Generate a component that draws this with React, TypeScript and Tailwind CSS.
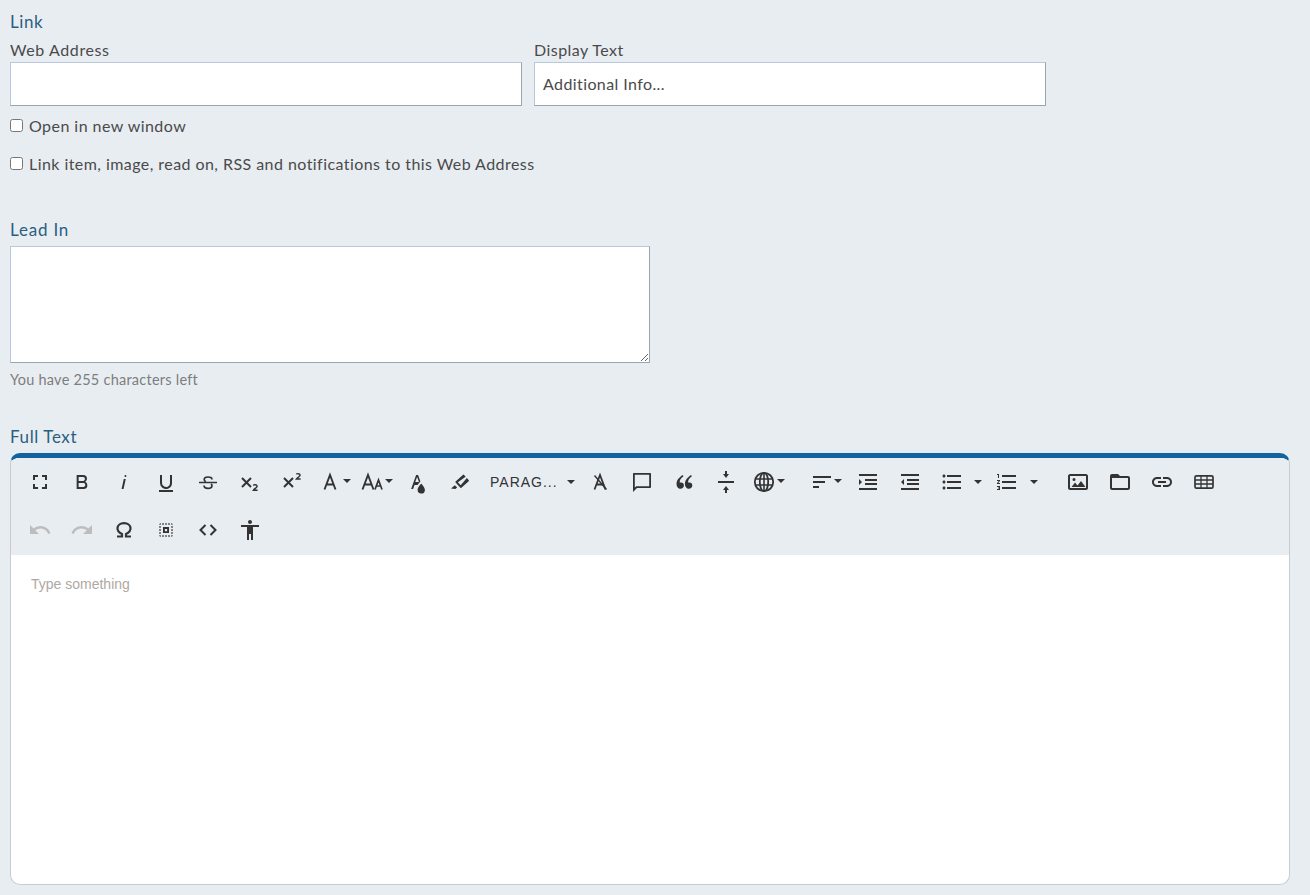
import React from "react";

const P = ({ d, s = 24, c = "#333333" }: { d: string; s?: number; c?: string }) => (
  <svg width={s} height={s} viewBox="0 0 24 24" fill={c} fillRule="evenodd" className="shrink-0">
    <path d={d} />
  </svg>
);

const Caret = ({ className = "" }: { className?: string }) => (
  <span className={"block w-0 h-0 border-l-[4px] border-r-[4px] border-t-[4px] border-l-transparent border-r-transparent border-t-[#333333] shrink-0 " + className} />
);

const Btn = ({ children, w = "w-[42px]" }: { children: React.ReactNode; w?: string }) => (
  <div className={"h-[48px] flex items-center justify-center shrink-0 " + w}>{children}</div>
);

const Stroke = ({ children, s = 24 }: { children: React.ReactNode; s?: number }) => (
  <svg width={s} height={s} viewBox="0 0 24 24" fill="none" stroke="#333333" strokeWidth="2" className="shrink-0">
    {children}
  </svg>
);

const d = {
  full: "M7 14H5v5h5v-2H7v-3zm-2-4h2V7h3V5H5v5zm12 7h-3v2h5v-5h-2v3zM14 5v2h3v3h2V5h-5z",
  bold: "M15.25,11.8h0A3.68,3.68,0,0,0,17,9a3.93,3.93,0,0,0-3.86-4H6.65V19h7a3.74,3.74,0,0,0,3.7-3.78V15.1A3.64,3.64,0,0,0,15.25,11.8ZM8.65,7h4.2a2.09,2.09,0,0,1,2,1.3,2.09,2.09,0,0,1-1.3,2.61,2.23,2.23,0,0,1-.66.09H8.65Zm4.6,10H8.65V13h4.6a2.09,2.09,0,0,1,2,1.3,2.09,2.09,0,0,1-1.3,2.61A2.23,2.23,0,0,1,13.25,17Z",
  italic: "M11.76,9h2l-2.2,10h-2Zm1.68-4a1,1,0,1,0,1,1,1,1,0,0,0-1-1Z",
  under: "M19,20v2H5V20Zm-3-6.785a4,4,0,0,1-5.74,3.4A3.75,3.75,0,0,1,8,13.085V5.005H6v8.21a6,6,0,0,0,8,5.44,5.851,5.851,0,0,0,4-5.65v-8H16Z",
  undo: "M12.5 8c-2.65 0-5.05.99-6.9 2.6L2 7v9h9l-3.62-3.62c1.39-1.16 3.16-1.88 5.12-1.88 3.54 0 6.55 2.31 7.6 5.5l2.37-.78C21.08 11.03 17.15 8 12.5 8z",
  redo: "M18.4 10.6C16.55 8.99 14.15 8 11.5 8c-4.65 0-8.58 3.03-9.96 7.22L3.9 16c1.05-3.19 4.05-5.5 7.6-5.5 1.95 0 3.73.72 5.12 1.88L13 16h9V7l-3.6 3.6z",
  select: "M3 5h2V3c-1.1 0-2 .9-2 2zm0 8h2v-2H3v2zm4 8h2v-2H7v2zM3 9h2V7H3v2zm10-6h-2v2h2V3zm6 0v2h2c0-1.1-.9-2-2-2zM5 21v-2H3c0 1.1.9 2 2 2zm-2-4h2v-2H3v2zM9 3H7v2h2V3zm2 18h2v-2h-2v2zm8-8h2v-2h-2v2zm0 8c1.1 0 2-.9 2-2h-2v2zm0-12h2V7h-2v2zm0 8h2v-2h-2v2zm-4 4h2v-2h-2v2zm0-16h2V3h-2v2zM8 16h8V8H8v8zm2.5-5.5h3v3h-3v-3z",
  acc: "M12 2c1.1 0 2 .9 2 2s-.9 2-2 2-2-.9-2-2 .9-2 2-2zm9 7h-6v13h-2v-6h-2v6H9V9H3V7h18v2z",
  chat: "M20,3H4C3.4,3,3,3.4,3,4v18l4-4h13c.6,0,1-.4,1-1V4C21,3.4,20.6,3,20,3z M19.2,16.2H6.2L4.8,17.6V4.8h14.4V16.2z",
  hr: "M9 20h2v3h2v-3h2l-3-4-3 4zm6-16h-2V1h-2v3H9l3 4 3-4zM4 11v2h16v-2H4z",
  indent: "M3,9v6l3-3L3,9z M3,20h18v-2H3V20z M3,6h18V4H3V6z M9,11h12V9H9V11z M9,15h12v-2H9V15z",
  outdent: "M6,9v6l-3-3L6,9z M3,20h18v-2H3V20z M3,6h18V4H3V6z M9,11h12V9H9V11z M9,15h12v-2H9V15z",
  ul: "M4 10.5c-.83 0-1.5.67-1.5 1.5s.67 1.5 1.5 1.5 1.5-.67 1.5-1.5-.67-1.5-1.5-1.5zm0-6c-.83 0-1.5.67-1.5 1.5S3.17 7.5 4 7.5 5.5 6.83 5.5 6 4.83 4.5 4 4.5zm0 12c-.83 0-1.5.68-1.5 1.5s.68 1.5 1.5 1.5 1.5-.68 1.5-1.5-.67-1.5-1.5-1.5zM7 19h14v-2H7v2zm0-6h14v-2H7v2zm0-8v2h14V5H7z",
  ol: "M2 17h2v.5H3v1h1v.5H2v1h3v-4H2v1zm1-9h1V4H2v1h1v3zm-1 3h1.8L2 13.1v.9h3v-1H3.2L5 10.9V10H2v1zm5-6v2h14V5H7zm0 14h14v-2H7v2zm0-6h14v-2H7v2z",
  image: "M20,4H4C3,4,2,5,2,6v12c0,1,1,2,2,2h16c1,0,2-1,2-2V6C22,5,21,4,20,4z M20,18H4V6h16V18z M5.5,17l3.5-4.5 2.5,3 3.5-4.5 4.5,6H5.5z M8,11a1.5,1.5,0,1,0,0-3a1.5,1.5,0,0,0,0,3z",
  folder: "M20 6h-8l-2-2H4c-1.1 0-1.99.9-1.99 2L2 18c0 1.1.9 2 2 2h16c1.1 0 2-.9 2-2V8c0-1.1-.9-2-2-2zm0 12H4V8h16v10z",
  link: "M3.9 12c0-1.71 1.39-3.1 3.1-3.1h4V7H7c-2.76 0-5 2.24-5 5s2.24 5 5 5h4v-1.9H7c-1.71 0-3.1-1.39-3.1-3.1zM8 13h8v-2H8v2zm9-6h-4v1.9h4c1.71 0 3.1 1.39 3.1 3.1s-1.39 3.1-3.1 3.1h-4V17h4c2.76 0 5-2.24 5-5s-2.24-5-5-5z",
  drop: "M15.2,13.494s-3.6,3.9-3.6,6.3a3.65,3.65,0,0,0,7.3.1v-.1C18.9,17.394,15.2,13.494,15.2,13.494Zm-1.47-1.357.669-.724L12.1,5h-2l-5,14h2l1.43-4h2.943A24.426,24.426,0,0,1,13.726,12.137ZM11.1,6.9l1.86,5.1H9.244Z",
  marker: "M9.9,12.2l7.7-5.4,1.2,1.3-6.1,7.2-2.8-3.1M7.6,12.6l4.5,5a.9.9,0,0,0,1.3.1l7.3-6.4a.9.9,0,0,0-.1-1.3L16.1,5a.9.9,0,0,0-1.3-.1L7.6,11.4A.9.9,0,0,0,7.6,12.6ZM6.8,15.2l-3.8,3.3,4.3.5,1.9-1.6Z",
  quote: "M10.6,5l.9,1.3c-1.4,1-2.4,1.9-3,2.9c-.5.8-.8,1.8-.8,2.9v.4l1.2-.1c1,0,1.7.3,2.2.9c.6.6.8,1.3.8,2.1c0,.9-.3,1.7-1,2.4c-.6.6-1.4.9-2.4.9c-1.1,0-2.1-.4-2.8-1.3C4.9,16.5,4.5,15.4,4.5,14c0-1.7.5-3.3,1.5-4.7C7,7.9,8.6,6.5,10.6,5z M19,5l.9,1.3c-1.4,1-2.4,1.9-3,2.9c-.5.8-.8,1.8-.8,2.9v.4l1.2-.1c1,0,1.7.3,2.2.9c.6.6.8,1.3.8,2.1c0,.9-.3,1.7-1,2.4c-.6.6-1.4.9-2.4.9c-1.1,0-2.1-.4-2.8-1.3c-.8-.9-1.2-2-1.2-3.4c0-1.7.5-3.3,1.5-4.7C15.4,7.9,17,6.5,19,5z",
};

const sans = "font-['Lato','Noto_Sans',sans-serif]";

function Toolbar() {
  return (
    <div className="bg-[#e8edf2] pl-[8px]">
      <div className="flex">
        <Btn><P d={d.full} /></Btn>
        <Btn><P d={d.bold} /></Btn>
        <Btn><P d={d.italic} /></Btn>
        <Btn><P d={d.under} /></Btn>
        <Btn>
          <Stroke>
            <path d="M16 9.5C16 7.8 14.2 7 12 7S8.2 8 8.2 9.6c0 1 .6 1.7 1.6 2.1M15 14c.7.5 1 1 1 1.8C16 17.5 14.2 18.4 12 18.4S8 17.4 8 15.6" strokeWidth="1.7" />
            <path d="M3 12.6h18" strokeWidth="1.5" />
          </Stroke>
        </Btn>
        <Btn>
          <svg width="24" height="24" viewBox="0 0 24 24" className="shrink-0">
            <path d="M4 8l9 9M13 8l-9 9" stroke="#333" strokeWidth="2" fill="none" />
            <path d="M15.5 15.6c.2-1.1 3.6-1.1 3.6.6 0 1.5-2.6 2.4-3.7 4.1h4.2" stroke="#333" strokeWidth="1.5" fill="none" />
          </svg>
        </Btn>
        <Btn>
          <svg width="24" height="24" viewBox="0 0 24 24" className="shrink-0">
            <path d="M4 8l9 9M13 8l-9 9" stroke="#333" strokeWidth="2" fill="none" />
            <path d="M16.5 4.4c.2-1.1 3.6-1.1 3.6.6 0 1.5-2.6 2.4-3.7 4.1h4.2" stroke="#333" strokeWidth="1.5" fill="none" />
          </svg>
        </Btn>
        <Btn>
          <Stroke><path d="M6.5 19.5L12 5l5.5 14.5M8.3 14.5h7.4" strokeWidth="1.9" /></Stroke>
          <Caret className="ml-[1px] -mt-[2px]" />
        </Btn>
        <Btn>
          <svg width="32" height="24" viewBox="0 0 32 24" fill="none" stroke="#333" strokeWidth="1.9" className="shrink-0">
            <path d="M2.5 19.5L8 5l5.5 14.5M4.3 14.5h7.4" />
            <path d="M15 19.5L18.5 10l3.5 9.5M16.2 16h4.6" strokeWidth="1.7" />
          </svg>
          <Caret className="-ml-[7px] -mt-[2px]" />
        </Btn>
        <Btn><P d={d.drop} /></Btn>
        <Btn><P d={d.marker} /></Btn>
        <Btn w="w-[98px]">
          <div className="w-full flex items-center pl-[9px]">
            <span className="font-['Liberation_Sans',Arial,sans-serif] text-[14px] tracking-[1px] text-[#333333] w-[77px]">PARAG...</span>
            <Caret className="-mt-[1px]" />
          </div>
        </Btn>
        <Btn>
          <Stroke>
            <path d="M6.5 19.5L12 5l5.5 14.5M8.3 14.5h7.4" strokeWidth="1.8" />
            <path d="M6.5 5.5l12 14" strokeWidth="1.4" />
          </Stroke>
        </Btn>
        <Btn><P d={d.chat} /></Btn>
        <Btn><P d={d.quote} /></Btn>
        <Btn><P d={d.hr} /></Btn>
        <Btn>
          <svg width="24" height="24" viewBox="0 0 24 24" fill="none" stroke="#333" strokeWidth="1.8" className="shrink-0">
            <circle cx="12" cy="12" r="9.2" />
            <ellipse cx="12" cy="12" rx="4.2" ry="9.2" />
            <path d="M3 9h18M3 15h18M12 3v18" strokeWidth="1.6" />
          </svg>
          <Caret className="ml-[1px] -mt-[2px]" />
        </Btn>
        <div className="w-[16px] shrink-0" />
        <Btn>
          <svg width="24" height="24" viewBox="0 0 24 24" fill="#333" className="shrink-0">
            <path d="M3 6h18v2H3zM3 11h12v2H3zM3 16h6v2H3z" />
          </svg>
          <Caret className="-mt-[2px]" />
        </Btn>
        <Btn><P d={d.indent} /></Btn>
        <Btn><P d={d.outdent} /></Btn>
        <Btn><P d={d.ul} /></Btn>
        <div className="w-[13px] h-[48px] flex items-center justify-start pl-[1px] shrink-0"><Caret /></div>
        <Btn><P d={d.ol} /></Btn>
        <div className="w-[14px] h-[48px] flex items-center justify-start pl-[2px] shrink-0"><Caret /></div>
        <div className="w-[15px] shrink-0" />
        <Btn><P d={d.image} /></Btn>
        <Btn><P d={d.folder} /></Btn>
        <Btn><P d={d.link} /></Btn>
        <Btn>
          <svg width="24" height="24" viewBox="0 0 24 24" fill="none" stroke="#333" className="shrink-0">
            <rect x="3" y="5.8" width="18" height="12.4" rx="1.5" strokeWidth="1.7" />
            <path d="M3 10h18M3 14h18M9 6v12M15 6v12" strokeWidth="1.3" />
          </svg>
        </Btn>
      </div>
      <div className="flex">
        <Btn><P d={d.undo} c="#bdbdbd" /></Btn>
        <Btn><P d={d.redo} c="#bdbdbd" /></Btn>
        <Btn>
          <Stroke>
            <path d="M5 18.5h5v-2.4C7.5 15 5.5 13 5.5 10.3 5.5 7 8.4 5.2 12 5.2s6.5 1.8 6.5 5.1c0 2.7-2 4.7-4.5 5.8v2.4h5" strokeWidth="2.2" />
          </Stroke>
        </Btn>
        <Btn><P d={d.select} s={18} /></Btn>
        <Btn>
          <Stroke><path d="M9.5 7l-5 5 5 5M14.5 7l5 5-5 5" strokeWidth="2" /></Stroke>
        </Btn>
        <Btn><P d={d.acc} /></Btn>
      </div>
    </div>
  );
}

export default function App() {
  return (
    <div className={"min-h-[895px] bg-[#e8edf2] pl-[10px] pr-[20px] pt-[11px] text-[#4a4a4a] " + sans}>
      <div className="text-[17px] leading-[22px] text-[#2a5f7f] tracking-[0.6px]">Link</div>
      <div className="flex gap-[12px] w-[1036px] mt-[5px]">
        <label className="flex-1">
          <span className="block text-[16px] leading-[23px] tracking-[0.6px] mb-[1px]">Web Address</span>
          <input className="block w-[512px] h-[44px] bg-white border border-[#b9c8dc] border-r-[#98a5b5] border-b-[#98a5b5] px-[8px] outline-none" />
        </label>
        <label className="flex-1">
          <span className="block text-[16px] leading-[23px] tracking-[0.45px] mb-[1px]">Display Text</span>
          <input readOnly defaultValue="Additional Info..." className="block w-[512px] h-[44px] bg-white border border-[#b9c8dc] border-r-[#98a5b5] border-b-[#98a5b5] px-[8px] pb-[2px] text-[16px] tracking-[0.4px] text-[#4a4a4a] outline-none" />
        </label>
      </div>
      <label className="flex items-center h-[22px] mt-[9px] text-[16px] tracking-[0.45px]">
        <input type="checkbox" className="w-[13px] h-[13px] m-0 mr-[6px] -mt-[2px]" />
        Open in new window
      </label>
      <label className="flex items-center h-[22px] mt-[16px] text-[16px] tracking-[0.44px]">
        <input type="checkbox" className="w-[13px] h-[13px] m-0 mr-[6px] -mt-[2px]" />
        Link item, image, read on, RSS and notifications to this Web Address
      </label>
      <div className="text-[17px] leading-[22px] text-[#2a5f7f] tracking-[0.8px] mt-[44px]">Lead In</div>
      <textarea className="block w-[640px] h-[117px] mt-[5px] bg-white border border-[#b9c8dc] border-r-[#98a5b5] border-b-[#98a5b5] outline-none" />
      <div className="text-[14.5px] leading-[20px] text-[#7d7d7d] mt-[7px] tracking-[0.25px]">You have 255 characters left</div>
      <div className="text-[17px] leading-[22px] text-[#2a5f7f] tracking-[0.6px] mt-[36px]">Full Text</div>
      <div className="w-[1280px] h-[432px] mt-[5px] rounded-[10px] border-t-[5px] border-t-[#13639f] border-x border-b border-x-[#c8ccd0] border-b-[#c8ccd0] bg-white overflow-hidden">
        <Toolbar />
        <div className="h-[1px] bg-[#e8edf2]" />
        <div className="pl-[20px] pt-[20px] font-['Liberation_Sans',Arial,sans-serif] text-[14px] leading-[18px] text-[#b0a8a2]">Type something</div>
      </div>
    </div>
  );
}
